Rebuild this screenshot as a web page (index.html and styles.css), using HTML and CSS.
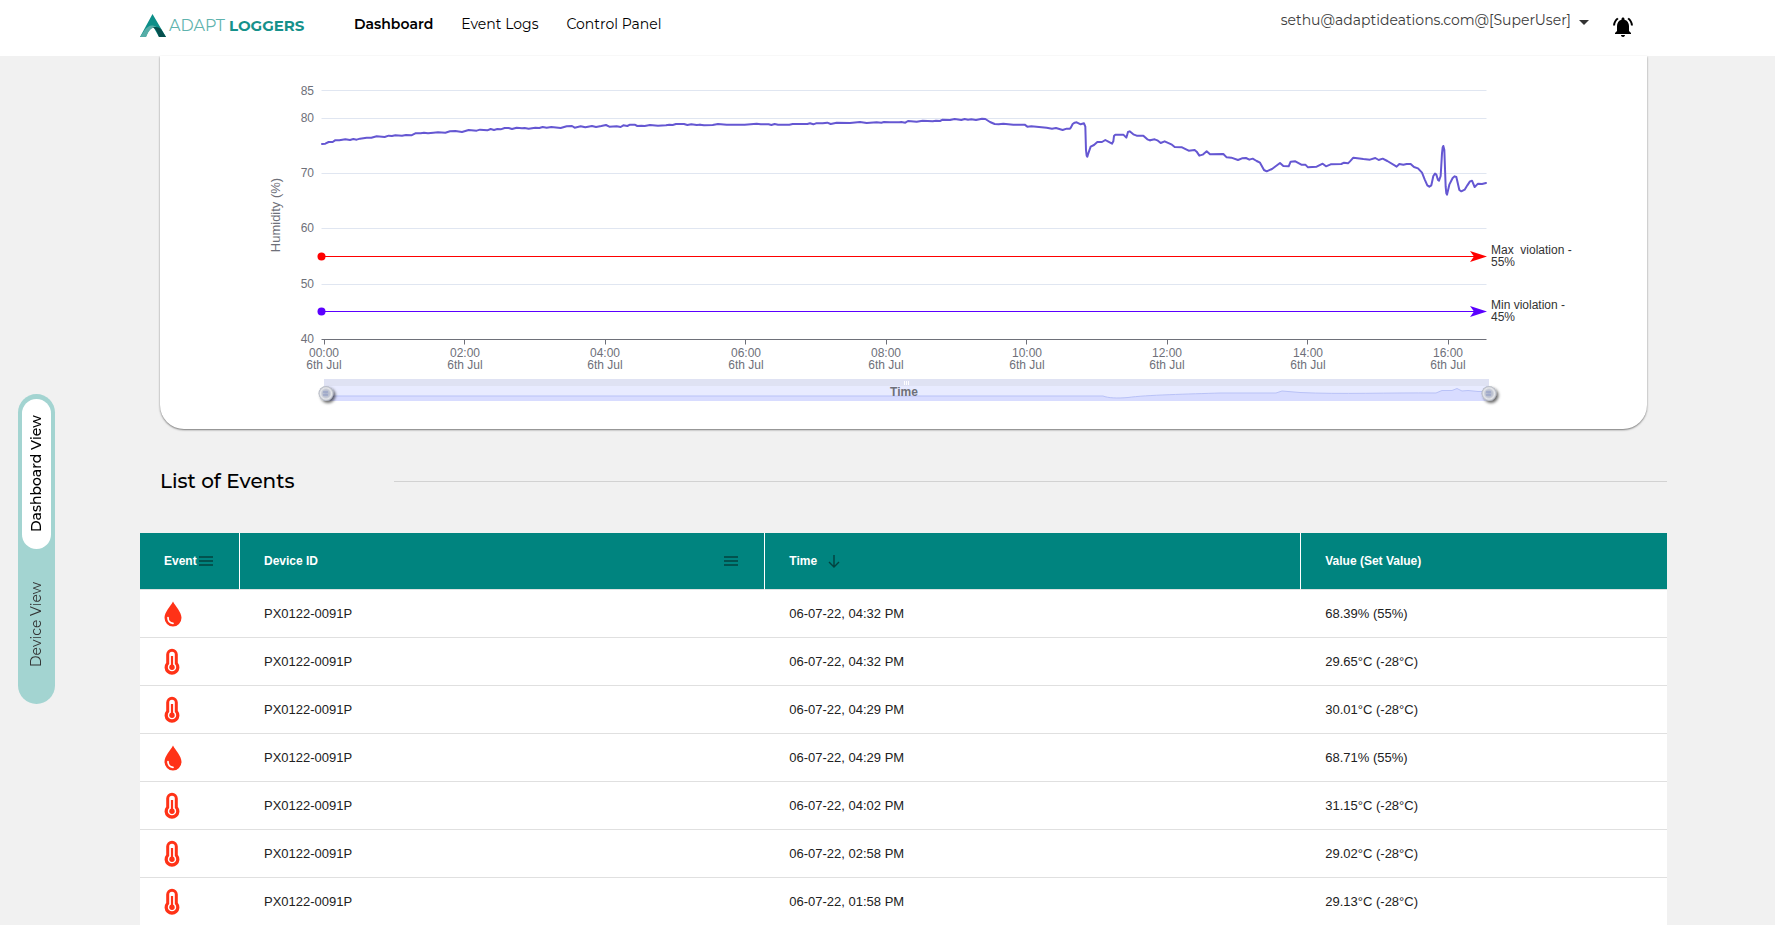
FILE: index.html
```html
<!DOCTYPE html>
<html lang="en">
<head>
<meta charset="utf-8">
<meta name="viewport" content="width=device-width, initial-scale=1">
<title>Adapt Loggers - Dashboard</title>
<link rel="stylesheet" href="styles.css">
</head>
<body>
<svg class="defs" width="0" height="0" aria-hidden="true">
  <symbol id="drop" viewBox="0 0 18 26">
    <path d="M9 .5C11.500 5.500 17.500 11 17.500 16.800A8.500 8.700 0 0 1 .5 16.800C.5 11 6.500 5.500 9 .5Z" fill="#ff3217"/>
    <path d="M4 16.500C4 20 6 22 9 22.300" fill="none" stroke="#fff" stroke-width="1.700" stroke-linecap="round"/>
  </symbol>
  <symbol id="thermo" viewBox="0 0 16 27">
    <path d="M2.200 6.500A5.800 5.800 0 0 1 13.800 6.500V14.800A7.400 7.400 0 1 1 2.200 14.800Z" fill="#ff3217"/>
    <path d="M5.200 6.500A2.800 2.800 0 0 1 10.800 6.500V16A4.200 4.200 0 1 1 5.200 16Z" fill="#fff"/>
    <path d="M8 8V18" stroke="#ff3217" stroke-width="2.200"/>
    <circle cx="8" cy="19.200" r="2.700" fill="#ff3217"/>
  </symbol>
  <symbol id="menu" viewBox="0 0 14 10">
    <path d="M0 1H14M0 5H14M0 9H14" stroke="#03413f" stroke-width="1.300"/>
  </symbol>
</svg>

<header class="topbar">
  <a class="brand" href="#" aria-label="Adapt Loggers">
    <svg class="brand-mark" width="26" height="24" viewBox="0 0 26 24" aria-hidden="true">
      <path d="M12.500 0L26 23H19L14 14C11 13 8 17 6 23H0Z" fill="#0d8f89"/>
      <path d="M0 23L4 17C8 11.500 12 10 17 13.500L14 13.500C10 14 8 19 6 23Z" fill="#56ada7"/>
      <path d="M13 13.300C16 12.500 19 13 21 15L26 23H19C17.500 19 16 15 13 13.300Z" fill="#07504e"/>
    </svg>
    <span class="brand-text"><span class="brand-light">ADAPT</span><span class="brand-bold">LOGGERS</span></span>
  </a>
  <nav class="nav">
    <a class="active" href="#">Dashboard</a>
    <a href="#">Event Logs</a>
    <a href="#">Control Panel</a>
  </nav>
  <button class="user" type="button">sethu@adaptideations.com@[SuperUser]<span class="caret"></span></button>
  <button class="bell" type="button" aria-label="Notifications">
    <svg width="24" height="24" viewBox="0 0 24 24"><path d="M7.580 4.080L6.150 2.650C3.750 4.480 2.170 7.300 2.030 10.500h2c.15-2.650 1.510-4.970 3.550-6.420zm12.390 6.420h2c-.15-3.200-1.730-6.020-4.120-7.850l-1.420 1.430c2.020 1.450 3.390 3.770 3.540 6.420zM18 11c0-3.070-1.640-5.640-4.500-6.320V4c0-.83-.67-1.500-1.500-1.500s-1.500.67-1.500 1.500v.68C7.630 5.360 6 7.920 6 11v5l-2 2v1h16v-1l-2-2v-5zm-6 11c.14 0 .27-.010.4-.040.65-.14 1.180-.58 1.440-1.180.1-.24.15-.5.15-.78h-4c.010 1.100.9 2 2.010 2z"/></svg>
  </button>
</header>

<div class="page">
  <aside class="side">
    <div class="toggle">
      <button class="toggle-item selected" type="button">Dashboard View</button>
      <button class="toggle-item" type="button">Device View</button>
    </div>
  </aside>

  <main class="content">
    <section class="card">
      <svg class="chart" viewBox="160 56 1487 373" role="img" aria-label="Humidity over time">
        <defs>
          <radialGradient id="knob"><stop offset="0" stop-color="#aab2cc"/><stop offset=".5" stop-color="#bfc4d2"/><stop offset=".75" stop-color="#e6e7ea"/><stop offset="1" stop-color="#a9aeba"/></radialGradient>
          <filter id="knob-shadow" x="-50%" y="-50%" width="200%" height="200%"><feDropShadow dx="2" dy="2" stdDeviation="1.500" flood-color="#000" flood-opacity=".6"/></filter>
        </defs>
        <path class="grid" d="M321.500 90.500H1486.500M321.500 118.500H1486.500M321.500 173.500H1486.500M321.500 228.500H1486.500M321.500 284.500H1486.500"/>
        <path class="axis" d="M321.500 339.500H1486.500M324.500 339.500v5M464.500 339.500v5M605.500 339.500v5M745.500 339.500v5M886.500 339.500v5M1026.500 339.500v5M1167.500 339.500v5M1307.500 339.500v5M1448.500 339.500v5"/>
        <g class="label end">
          <text x="314" y="95">85</text><text x="314" y="122">80</text><text x="314" y="177">70</text>
          <text x="314" y="232">60</text><text x="314" y="288">50</text><text x="314" y="343">40</text>
        </g>
        <text class="label title" transform="translate(280 215) rotate(-90)">Humidity (%)</text>
        <g class="label mid">
          <text x="324" y="357">00:00</text><text x="324" y="369">6th Jul</text>
          <text x="465" y="357">02:00</text><text x="465" y="369">6th Jul</text>
          <text x="605" y="357">04:00</text><text x="605" y="369">6th Jul</text>
          <text x="746" y="357">06:00</text><text x="746" y="369">6th Jul</text>
          <text x="886" y="357">08:00</text><text x="886" y="369">6th Jul</text>
          <text x="1027" y="357">10:00</text><text x="1027" y="369">6th Jul</text>
          <text x="1167" y="357">12:00</text><text x="1167" y="369">6th Jul</text>
          <text x="1308" y="357">14:00</text><text x="1308" y="369">6th Jul</text>
          <text x="1448" y="357">16:00</text><text x="1448" y="369">6th Jul</text>
        </g>

        <g class="series">
          <polyline transform="translate(250 70) scale(.33333)" points="216,222 226,221 236,216 248,216 255,211 268,211 286,208 300,210 310,207 320,209 330,206 350,203 364,203 380,199 404,201 416,197 426,198 436,196 456,197 468,195 484,196 496,190 512,190 522,188 534,190 550,188 564,187 586,188 600,184 616,183 636,186 656,180 680,182 690,179 712,181 722,177 732,180 742,177 752,178 764,174 776,174 786,177 800,173 816,175 824,174 836,176 856,173 868,174 878,171 890,173 904,171 932,174 950,169 966,168 974,173 992,169 1006,172 1026,168 1038,171 1054,168 1068,165 1078,170 1100,169 1112,171 1120,166 1132,168 1140,164 1154,164 1162,168 1174,167 1184,168 1200,165 1224,167 1248,166 1258,164 1268,165 1278,162 1302,162 1312,165 1324,163 1340,165 1350,164"/>
          <polyline transform="translate(700 70) scale(.33333)" points="0,164 12,166 38,165 54,162 80,164 134,164 170,161 182,163 206,163 214,165 224,162 234,164 268,164 278,162 322,162 330,160 340,163 348,160 368,160 382,158 392,162 410,158 450,159 480,156 500,159 530,157 544,158 552,156 570,157 598,157 604,156 616,158 624,153 650,155 668,152 698,154 708,152 720,153 728,149 750,150 764,147 784,150 794,147 804,149 814,148 828,150 846,146 856,147 870,156 884,162 896,163 910,161 940,164 974,164 982,170 994,169 1040,173 1056,176 1068,174 1088,180 1100,176 1110,176 1113,172 1118,162 1124,158 1130,157 1142,163 1152,160 1156,170 1158,240 1160,257 1162,260 1165,250 1172,230 1182,225 1192,216 1206,216 1216,210 1225,215 1236,221 1240,214 1242,198 1246,194 1270,194 1279,203 1284,186 1289,184 1300,193 1310,197 1330,197 1342,208 1350,211"/>
          <polyline transform="translate(1150 70) scale(.33333)" points="0,211 14,208 22,211 32,219 44,214 64,223 74,231 96,232 116,242 134,240 140,245 148,257 158,254 170,244 180,253 220,252 230,262 244,263 264,270 276,265 288,264 298,269 308,266 320,273 330,278 342,300 350,304 366,297 390,279 400,288 416,289 422,275 436,274 454,284 466,284 474,292 500,290 518,281 528,289 542,283 574,282 582,278 594,280 600,274 610,263 640,267 660,269 676,264 686,270 698,266 712,273 740,290 748,282 760,284 770,282 782,282 792,291 804,295 816,308 824,328 832,346 838,350 844,346 850,318 855,311 859,314 864,330 867,332 872,318 876,250 878,232 880,228 883,240 887,350 889,370 891,374 898,344 908,324 914,319 919,321 922,334 928,360 934,364 944,359 952,346 960,334 966,332 974,351 984,341 996,342 1008,339"/>
        </g>

        <g class="limit max">
          <path d="M321.500 256.500H1480"/><circle cx="321.500" cy="256.500" r="4"/>
          <polygon points="1487,256.500 1470,251 1474,256.500 1470,262"/>
        </g>
        <g class="limit min">
          <path d="M321.500 311.500H1480"/><circle cx="321.500" cy="311.500" r="4"/>
          <polygon points="1487,311.500 1470,306 1474,311.500 1470,317"/>
        </g>
        <g class="note">
          <text x="1491" y="254">Max&#160; violation -</text><text x="1491" y="266">55%</text>
          <text x="1491" y="309">Min violation -</text><text x="1491" y="321">45%</text>
        </g>

        <rect x="324" y="379" width="1165" height="22" fill="#e8ebff"/>
        <rect x="324" y="379" width="1165" height="7" fill="#dfe2f3"/>
        <path d="M324 396H1103C1108 398 1117 398.500 1128 397.500C1145 395 1190 394 1220 393H1276L1282 391L1300 392.500C1340 394.500 1390 392.500 1436 393L1442 390.500H1452L1457 388.500L1462 391L1468 390.500L1478 391.500H1489V401H324Z" fill="#d8dcff"/>
        <path d="M324 396H1103C1108 398 1117 398.500 1128 397.500C1145 395 1190 394 1220 393H1276L1282 391L1300 392.500C1340 394.500 1390 392.500 1436 393L1442 390.500H1452L1457 388.500L1462 391L1468 390.500L1478 391.500H1489" fill="none" stroke="#b9c2f7"/>
        <path d="M904.500 381v4M906.500 381v4M908.500 381v4" stroke="#fff"/>
        <text class="label name" x="904" y="396">Time</text>
        <g filter="url(#knob-shadow)"><circle cx="326" cy="393.500" r="7.500" fill="url(#knob)"/><circle cx="1489" cy="393.500" r="7.500" fill="url(#knob)"/></g>
        <path d="M323 392h5M323 395h5M1486 392h5M1486 395h5" stroke="#8f9bc4"/>
      </svg>
    </section>

    <div class="heading">
      <h2>List of Events</h2>
      <hr>
    </div>

    <table class="events">
      <colgroup><col class="c-event"><col class="c-device"><col class="c-time"><col></colgroup>
      <thead>
        <tr>
          <th><div class="th tight">Event<button type="button" aria-label="Event column menu"><svg width="14" height="10"><use href="#menu"/></svg></button></div></th>
          <th><div class="th spread">Device ID<button type="button" aria-label="Device ID column menu"><svg width="14" height="10"><use href="#menu"/></svg></button></div></th>
          <th><div class="th">Time<button class="sort" type="button" aria-label="Sort by time"><svg width="12" height="13" viewBox="0 0 12 13"><path d="M6 0V12M1 7L6 12L11 7" fill="none" stroke="#03413f" stroke-width="1.400"/></svg></button></div></th>
          <th><div class="th">Value (Set Value)</div></th>
        </tr>
      </thead>
      <tbody>
        <tr><td><svg class="drop" role="img" aria-label="Humidity"><use href="#drop"/></svg></td><td>PX0122-0091P</td><td>06-07-22, 04:32 PM</td><td>68.39% (55%)</td></tr>
        <tr><td><svg class="thermo" role="img" aria-label="Temperature"><use href="#thermo"/></svg></td><td>PX0122-0091P</td><td>06-07-22, 04:32 PM</td><td>29.65°C (-28°C)</td></tr>
        <tr><td><svg class="thermo" role="img" aria-label="Temperature"><use href="#thermo"/></svg></td><td>PX0122-0091P</td><td>06-07-22, 04:29 PM</td><td>30.01°C (-28°C)</td></tr>
        <tr><td><svg class="drop" role="img" aria-label="Humidity"><use href="#drop"/></svg></td><td>PX0122-0091P</td><td>06-07-22, 04:29 PM</td><td>68.71% (55%)</td></tr>
        <tr><td><svg class="thermo" role="img" aria-label="Temperature"><use href="#thermo"/></svg></td><td>PX0122-0091P</td><td>06-07-22, 04:02 PM</td><td>31.15°C (-28°C)</td></tr>
        <tr><td><svg class="thermo" role="img" aria-label="Temperature"><use href="#thermo"/></svg></td><td>PX0122-0091P</td><td>06-07-22, 02:58 PM</td><td>29.02°C (-28°C)</td></tr>
        <tr><td><svg class="thermo" role="img" aria-label="Temperature"><use href="#thermo"/></svg></td><td>PX0122-0091P</td><td>06-07-22, 01:58 PM</td><td>29.13°C (-28°C)</td></tr>
      </tbody>
    </table>
  </main>
</div>
</body>
</html>
```
FILE: styles.css
```css
* { box-sizing: border-box; }

body {
  margin: 0;
  background: #f1f1f1;
  color: #000;
  font-family: Montserrat, Inter, sans-serif;
  font-size: 14px;
}

button {
  margin: 0;
  padding: 0;
  border: 0;
  background: none;
  color: inherit;
  font: inherit;
  cursor: pointer;
}

a { color: inherit; text-decoration: none; }

.defs { position: absolute; }

/* Top bar */
.topbar {
  display: flex;
  align-items: flex-start;
  height: 56px;
  padding: 0 140px;
  background: #fff;
}

.brand { display: flex; gap: 3px; width: 214px; padding-top: 14px; font-size: 15px; }
.brand-text { display: flex; gap: 4px; line-height: 24px; }
.brand-light { color: #5fb3ae; font-size: 16px; font-weight: 400; }
.brand-bold { color: #15918b; font-weight: 700; }

.nav { display: flex; gap: 28px; padding-top: 12px; line-height: 24px; }
.nav .active { font-weight: 600; }

.user {
  display: flex;
  align-items: center;
  gap: 8px;
  margin-left: auto;
  padding-top: 8px;
  color: #3c3c3c;
  line-height: 24px;
}

.caret {
  margin-top: 5px;
  border: 5px solid transparent;
  border-top-color: #333;
  border-bottom: 0;
}

.bell { margin-left: 22px; padding-top: 15px; line-height: 0; }

/* Page */
.page { display: flex; padding-right: 108px; }
.side { flex: 0 0 140px; padding: 338px 0 0 18px; }
.content { flex: 1; min-width: 0; }

.toggle {
  display: flex;
  flex-direction: column;
  width: 37px;
  padding: 5px 4px;
  border-radius: 19px;
  background: #a3d4d1;
}

.toggle-item {
  width: 29px;
  height: 150px;
  border-radius: 15px;
  color: #333;
  line-height: 29px;
  writing-mode: vertical-rl;
  transform: rotate(180deg);
}

.toggle-item.selected { background: #fff; color: #000; font-weight: 500; }

/* Chart */
.card {
  margin: 0 20px;
  border-radius: 0 0 24px 24px;
  background: #fff;
  box-shadow: 0 1px 2px #777;
}

.chart { display: block; width: 100%; font-family: "Liberation Sans", Arial, sans-serif; font-size: 12px; }
.grid { stroke: #e0e6f1; fill: none; }
.axis { stroke: #6e7079; fill: none; }
.label { fill: #6e7079; }
.note { fill: #333; }
.end { text-anchor: end; }
.mid, .title, .name { text-anchor: middle; }
.title { font-size: 13px; }
.name { font-weight: 700; }
.series { fill: none; stroke: #6557d2; stroke-width: 6; stroke-linecap: round; stroke-linejoin: round; }
.max { stroke: #f00; fill: #f00; }
.min { stroke: #5b00ff; fill: #5b00ff; }
.limit polygon, .limit circle { stroke: none; }

/* Events */
.heading { display: flex; align-items: center; height: 104px; padding-left: 20px; }
.heading h2 { width: 234px; margin: 0; font-size: 20px; font-weight: 500; line-height: 24px; }
.heading hr { flex: 1; margin: 0; border: 0; border-top: 1px solid #d2d2d2; }

.events {
  width: 100%;
  border-collapse: separate;
  border-spacing: 0;
  table-layout: fixed;
  background: #fff;
  color: #212121;
  font-family: "Liberation Sans", Arial, sans-serif;
  font-size: 13px;
}

.c-event { width: 100px; }
.c-device { width: 34.4%; }
.c-time { width: 35.1%; }

.events th {
  height: 57px;
  padding: 0 0 0 24px;
  border-right: 1px solid #fff;
  border-bottom: 1px solid #dde2e2;
  background: #00847f;
  color: #fff;
  font-size: 12px;
  text-align: left;
}

.events th:last-child { border-right: 0; }
.events td { height: 48px; padding: 0 24px; border-bottom: 1px solid #e0e0e0; }

.th { display: flex; align-items: center; }
.th button { display: flex; }
.tight { gap: 2px; }
.spread { justify-content: space-between; padding-right: 26px; }
.sort { margin-left: 11px; }

.drop, .thermo { display: block; }
.drop { width: 18px; height: 26px; }
.thermo { width: 16px; height: 27px; }
```
